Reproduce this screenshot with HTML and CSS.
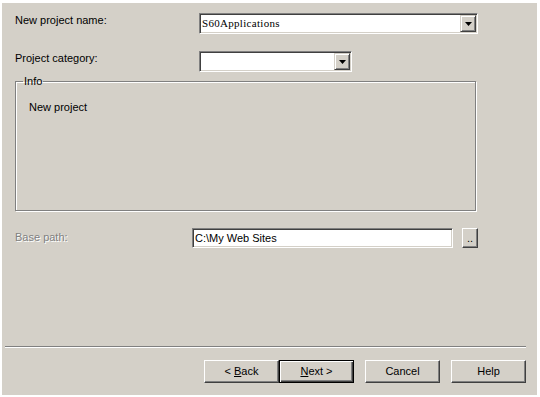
FILE: index.html
```html
<!DOCTYPE html>
<html lang="en">
<head>
    <meta charset="UTF-8">
    <title>New Project Wizard</title>
    <link rel="stylesheet" href="styles.css">
</head>
<body>
    <div class="dialog">
        <div class="content">
            <div class="row row-name">
                <label class="label">New project name:</label>
                <div class="combo combo-wide">
                    <span class="combo-text">S60Applications</span>
                    <span class="drop"><svg width="7" height="4" viewBox="0 0 7 4"><path d="M0 0h7L3.5 4z" fill="#000"/></svg></span>
                </div>
            </div>
            <div class="row row-cat">
                <label class="label">Project category:</label>
                <div class="combo combo-short">
                    <span class="combo-text"></span>
                    <span class="drop"><svg width="7" height="4" viewBox="0 0 7 4"><path d="M0 0h7L3.5 4z" fill="#000"/></svg></span>
                </div>
            </div>
            <fieldset class="group">
                <legend>Info</legend>
                <p class="info-text">New project</p>
            </fieldset>
            <div class="row row-path">
                <label class="label label-path disabled">Base path:</label>
                <div class="field">C:\My Web Sites</div>
                <button class="btn browse">..</button>
            </div>
        </div>
        <div class="separator"></div>
        <div class="buttons">
            <button class="btn wiz">&lt; <u>B</u>ack</button>
            <button class="btn wiz default"><u>N</u>ext &gt;</button>
            <button class="btn wiz spaced">Cancel</button>
            <button class="btn wiz spaced">Help</button>
        </div>
    </div>
</body>
</html>
```

FILE: styles.css
```css
body {
    margin: 0;
    background: #fff;
    font-family: "Liberation Sans", Arial, sans-serif;
    font-size: 11px;
    color: #000;
}

.dialog {
    margin: 3px 0 0 2px;
    width: 535px;
    height: 392px;
    background: #d4d0c8;
    display: flex;
    flex-direction: column;
}

.content {
    padding: 10px 0 0 13px;
}

.row {
    display: flex;
    align-items: flex-start;
}

.row-cat {
    margin-top: 17px;
}

.label {
    width: 184px;
    line-height: 13px;
    margin-top: 1px;
}

.label-path {
    width: 177px;
    margin-top: 3px;
}

.disabled {
    color: #808080;
    text-shadow: 1px 1px 0 #fff;
}

/* sunken controls */
.combo, .field {
    box-sizing: border-box;
    background: #fff;
    border: 1px solid;
    border-color: #808080 #fff #fff #808080;
    box-shadow: inset 1px 1px 0 #404040, inset -1px -1px 0 #d4d0c8;
    padding: 1px;
    display: flex;
}

.combo {
    height: 21px;
}

.combo-wide {
    width: 279px;
}

.combo-short {
    width: 153px;
}

.combo-text {
    flex: 1;
    font-family: "Liberation Serif", "Times New Roman", serif;
    font-size: 11px;
    letter-spacing: 0.3px;
    line-height: 17px;
    padding-left: 1px;
}

.drop {
    box-sizing: border-box;
    width: 16px;
    height: 17px;
    background: #d4d0c8;
    border: 1px solid;
    border-color: #d4d0c8 #404040 #404040 #d4d0c8;
    box-shadow: inset 1px 1px 0 #fff, inset -1px -1px 0 #808080;
    display: flex;
    align-items: center;
    justify-content: center;
}

.drop svg {
    display: block;
}

.group {
    margin: 0;
    margin-top: 3px;
    width: 461px;
    box-sizing: border-box;
    height: 136px;
    padding: 0;
    border: 1px solid #808080;
    box-shadow: 1px 1px 0 #fff, inset 1px 1px 0 #fff;
}

.group legend {
    margin-left: 7px;
    padding: 0 1px;
    line-height: 13px;
}

.info-text {
    margin: 13px 0 0 13px;
    line-height: 13px;
}

.row-path {
    margin-top: 17px;
}

.field {
    width: 261px;
    height: 20px;
    line-height: 16px;
    padding-left: 2px;
}

.btn {
    box-sizing: border-box;
    background: #d4d0c8;
    border: 1px solid;
    border-color: #fff #404040 #404040 #fff;
    box-shadow: inset -1px -1px 0 #808080;
    font-family: inherit;
    font-size: 11px;
    color: #000;
    padding: 0;
    margin: 0;
}

.browse {
    width: 16px;
    height: 20px;
    margin-left: 9px;
    line-height: 14px;
}

.separator {
    margin: auto 0 0 3px;
    width: 521px;
    height: 1px;
    background: #808080;
    border-bottom: 1px solid #fff;
}

.buttons {
    display: flex;
    justify-content: flex-end;
    margin-top: 12px;
    padding: 0 11px 12px 0;
}

.wiz {
    width: 75px;
    height: 23px;
    padding-bottom: 1px;
}

.default {
    border-color: #000;
    box-shadow: inset 1px 1px 0 #fff, inset -1px -1px 0 #404040, inset -2px -2px 0 #808080;
}

.spaced {
    margin-left: 11px;
}
```
